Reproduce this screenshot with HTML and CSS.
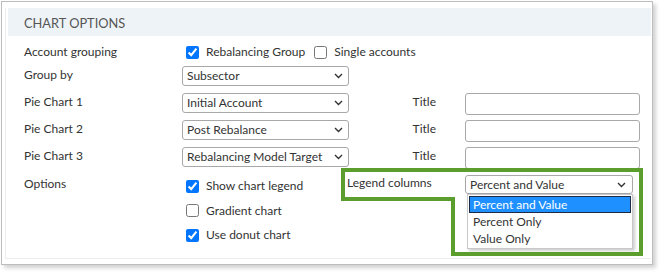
FILE: index.html
```html
<!DOCTYPE html>
<html>
<head>
<meta charset="utf-8">
<link rel="stylesheet" href="styles.css">
</head>
<body>
<div class="panel">
  <div class="card">
    <div class="head">CHART OPTIONS</div>
    <div class="form">
      <div class="lbl row-a">Account grouping</div>
      <div class="inline-checks span3">
        <label class="chk"><input type="checkbox" checked>Rebalancing Group</label>
        <label class="chk"><input type="checkbox">Single accounts</label>
      </div>

      <div class="lbl">Group by</div>
      <div class="sel"><span>Subsector</span><svg class="chev" width="9" height="6" viewBox="0 0 9 6"><path d="M1 1l3.5 3.5L8 1" fill="none" stroke="#333" stroke-width="1.4"/></svg></div>
      <div class="span2"></div>

      <div class="lbl">Pie Chart 1</div>
      <div class="sel"><span>Initial Account</span><svg class="chev" width="9" height="6" viewBox="0 0 9 6"><path d="M1 1l3.5 3.5L8 1" fill="none" stroke="#333" stroke-width="1.4"/></svg></div>
      <div class="lbl title">Title</div>
      <div class="inp"></div>

      <div class="lbl">Pie Chart 2</div>
      <div class="sel"><span>Post Rebalance</span><svg class="chev" width="9" height="6" viewBox="0 0 9 6"><path d="M1 1l3.5 3.5L8 1" fill="none" stroke="#333" stroke-width="1.4"/></svg></div>
      <div class="lbl title">Title</div>
      <div class="inp"></div>

      <div class="lbl">Pie Chart 3</div>
      <div class="sel"><span>Rebalancing Model Target</span><svg class="chev" width="9" height="6" viewBox="0 0 9 6"><path d="M1 1l3.5 3.5L8 1" fill="none" stroke="#333" stroke-width="1.4"/></svg></div>
      <div class="lbl title">Title</div>
      <div class="inp"></div>

      <div class="lbl opt">Options</div>
      <div class="checklist">
        <label class="chk"><input type="checkbox" checked>Show chart legend</label>
        <label class="chk"><input type="checkbox">Gradient chart</label>
        <label class="chk"><input type="checkbox" checked>Use donut chart</label>
      </div>
      <div class="lbl legend">Legend columns</div>
      <div class="sel-wrap">
        <div class="sel sel-legend"><span>Percent and Value</span><svg class="chev" width="9" height="6" viewBox="0 0 9 6"><path d="M1 1l3.5 3.5L8 1" fill="none" stroke="#333" stroke-width="1.4"/></svg></div>
        <ul class="dropdown">
          <li class="active">Percent and Value</li>
          <li>Percent Only</li>
          <li>Value Only</li>
        </ul>
      </div>
    </div>
  </div>
</div>
<svg class="callout" width="663" height="275" viewBox="0 0 663 275">
  <path d="M343 170H641V254H453V199H343Z" fill="none" stroke="#5c9e2e" stroke-width="4"/>
</svg>
</body>
</html>
```
FILE: styles.css
```css
* { box-sizing: border-box; }
body {
  margin: 0;
  background: #fff;
  font-family: "Lato", "Open Sans", sans-serif;
  font-size: 12px;
  color: #333;
  position: relative;
  width: 663px;
  height: 275px;
}
.panel {
  margin: 1px 0 0 1px;
  width: 652px;
  height: 264px;
  border: 1px solid #bdbdbd;
  box-shadow: 3px 3px 4px rgba(0,0,0,0.18);
  padding: 6px 1px 5px 3px;
  background: #fff;
}
.card {
  height: 100%;
  border-left: 1px solid #ededed;
  border-bottom: 1px solid #ededed;
  padding-left: 2px;
}
.head {
  height: 28px;
  background: #eef3f7;
  padding: 1px 0 0 16px;
  line-height: 28px;
  font-size: 12.8px;
  color: #555;
}
.form {
  display: grid;
  grid-template-columns: 158px 167px 116px 175px;
  grid-template-rows: 24px 27px 27px 27px 27px auto;
  padding: 4px 0 0 16px;
}
.span3 { grid-column: span 3; }
.span2 { grid-column: span 2; }
.lbl {
  line-height: 18px;
  margin-top: 2px;
  white-space: nowrap;
}
.lbl.row-a { margin-top: 3px; }
.lbl.title { text-align: right; padding-right: 29px; }
.lbl.opt { margin-top: 3px; }
.lbl.legend { margin-top: 2px; margin-left: -2px; }
.inline-checks {
  display: flex;
  align-items: center;
  gap: 9px;
  padding-left: 4px;
}
.chk {
  display: flex;
  align-items: center;
  gap: 7px;
  white-space: nowrap;
  line-height: 18px;
}
.chk input {
  margin: 0;
  width: 13px;
  height: 13px;
  accent-color: #0075ff;
}
.checklist {
  display: flex;
  flex-direction: column;
  padding: 2px 0 0 4px;
}
.checklist .chk { height: 24.5px; }
.sel {
  margin-top: 2px;
  width: 167px;
  height: 20px;
  border: 1px solid #a8a8a8;
  border-radius: 3px;
  display: flex;
  align-items: center;
  justify-content: space-between;
  padding: 0 5px 0 4px;
  line-height: 18px;
  background: #fff;
  white-space: nowrap;
}
.chev { flex: none; }
.inp {
  margin-top: 2px;
  width: 175px;
  height: 22px;
  border: 1px solid #a8a8a8;
  border-radius: 3px;
}
.sel-wrap {
  position: relative;
  margin-top: 3px;
}
.sel-legend {
  margin-top: 0;
  width: 168px;
  height: 19px;
  padding-right: 6px;
}
.dropdown {
  position: absolute;
  left: 2px;
  top: 19px;
  width: 166px;
  margin: 0;
  padding: 1px;
  list-style: none;
  background: #fff;
  border: 1px solid #c8c8c8;
  box-shadow: 2px 2px 3px rgba(0,0,0,0.2);
}
.dropdown li {
  height: 17px;
  line-height: 17px;
  padding-left: 4px;
  white-space: nowrap;
}
.dropdown li.active {
  background: #1e90ff;
  color: #fff;
  border: 1px solid #1c2a44;
  line-height: 15px;
  padding-left: 3px;
}
.callout {
  position: absolute;
  left: 0;
  top: 0;
  pointer-events: none;
}
```
